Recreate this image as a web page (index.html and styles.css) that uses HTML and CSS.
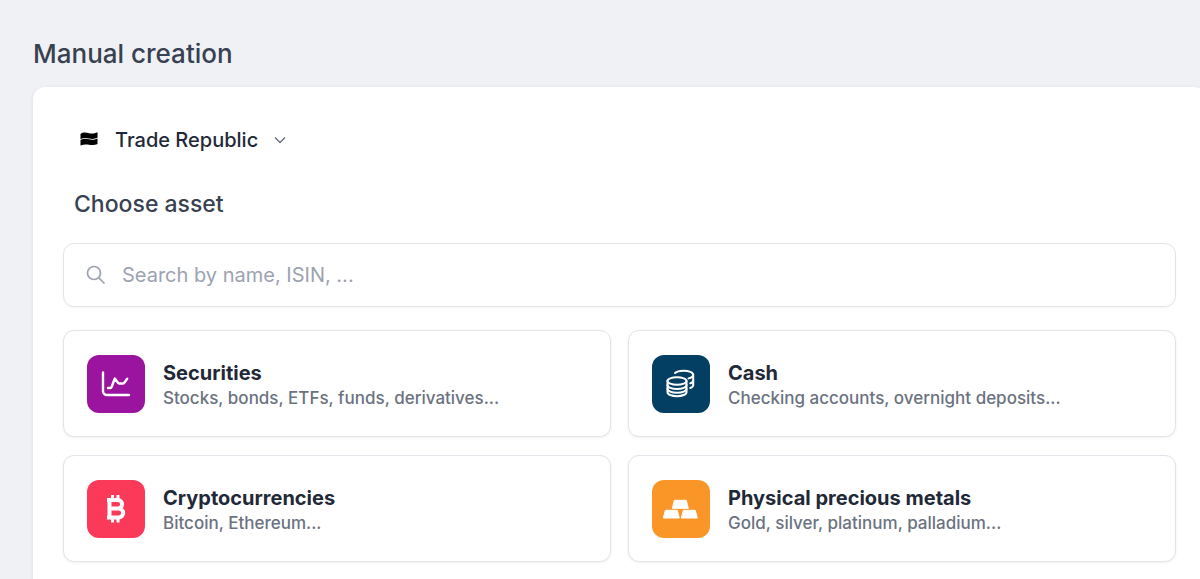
FILE: index.html
```html
<!DOCTYPE html>
<html lang="en">
<head>
    <meta charset="UTF-8">
    <meta name="viewport" content="width=device-width, initial-scale=1.0">
    <title>Manual creation</title>
    <link rel="stylesheet" href="styles.css">
</head>
<body>
    <h1>Manual creation</h1>
    <main class="panel">
        <!-- Account -->
        <div class="account">
            <svg class="account-logo" viewBox="0 0 18 14" aria-hidden="true">
                <path d="M.5 2C3 0 6 .6 9 1.200c3 .6 5.500.4 8.500-1v5.600c-3 1.400-5.500 1.300-8.500.7C6 5.900 3.500 5.400.5 7.200z"/>
                <path d="M.5 8C3.500 6.200 6 6.700 9 7.300c3 .6 5.500.5 8.500-.9v5.600c-3 1.300-5.500 1.300-8.500.8-3-.5-5.500-.5-8.500.7z"/>
            </svg>
            <div class="account-select">
                <select id="account" name="account" aria-label="Account">
                    <option>Trade Republic</option>
                </select>
                <svg class="chevron" viewBox="0 0 12 8" aria-hidden="true">
                    <path d="M1 1.500l5 5 5-5"/>
                </svg>
            </div>
        </div>

        <h2>Choose asset</h2>

        <!-- Search -->
        <label class="search">
            <svg viewBox="0 0 20 20" aria-hidden="true">
                <circle cx="8" cy="8" r="6.500"/>
                <path d="M12.800 12.800l5.700 5.700"/>
            </svg>
            <input type="text" name="search" placeholder="Search by name, ISIN, ..." aria-label="Search">
        </label>

        <!-- Asset types -->
        <div class="assets">
            <button type="button" class="asset">
                <span class="icon securities">
                    <svg viewBox="0 0 58 58" aria-hidden="true">
                        <path d="M16 17.500v18.500a4 4 0 0 0 4 4h22"/>
                        <path d="M21 33h2.200a1.500 1.500 0 0 0 1.400-1l3.200-8.500 3.400 4.500a1 1 0 0 0 .9.500h3.500a2 2 0 0 0 1.700-.8l2.900-4"/>
                    </svg>
                </span>
                <span class="text">
                    <strong>Securities</strong>
                    <small>Stocks, bonds, ETFs, funds, derivatives...</small>
                </span>
            </button>
            <button type="button" class="asset">
                <span class="icon cash">
                    <svg viewBox="0 0 58 58" aria-hidden="true">
                        <ellipse cx="25" cy="26" rx="9.500" ry="3.800"/>
                        <path d="M15.500 26v11.200c0 2.200 4.200 4 9.500 4s9.500-1.800 9.500-4V26"/>
                        <path d="M15.500 30c0 2.200 4.200 4 9.500 4s9.500-1.800 9.500-4M15.500 33.800c0 2.200 4.200 4 9.500 4s9.500-1.800 9.500-4"/>
                        <path d="M23 18c1.500-1.500 4.500-2.300 8.500-2.300 5.500 0 9.700 1.800 9.700 4v10.500c0 1.200-1 2-3 2.800"/>
                        <path d="M41.200 19.700c0 2-1.700 3-4.700 3.700M41.200 25.200c0 1.500-1 2.500-3 3.200"/>
                    </svg>
                </span>
                <span class="text">
                    <strong>Cash</strong>
                    <small>Checking accounts, overnight deposits...</small>
                </span>
            </button>
            <button type="button" class="asset">
                <span class="icon crypto">
                    <svg viewBox="0 0 58 58" aria-hidden="true">
                        <path d="M20 20h10.800a4.200 4.200 0 0 1 0 8.500H22.500M31 28.500h.7a4.500 4.500 0 0 1 0 9H20M22.500 20v17.500"/>
                        <path class="ticks" d="M25.500 15v4M31 15v4M25.500 38.500v4M31 38.500v4"/>
                    </svg>
                </span>
                <span class="text">
                    <strong>Cryptocurrencies</strong>
                    <small>Bitcoin, Ethereum...</small>
                </span>
            </button>
            <button type="button" class="asset">
                <span class="icon metals">
                    <svg viewBox="0 0 58 58" aria-hidden="true">
                        <path d="M22.700 20.300h11.600l2 8H20.700z"/>
                        <path d="M13.700 30.300h11.600l2 7.700H11.700z"/>
                        <path d="M31.700 30.300h11.600l2 7.700H29.700z"/>
                    </svg>
                </span>
                <span class="text">
                    <strong>Physical precious metals</strong>
                    <small>Gold, silver, platinum, palladium...</small>
                </span>
            </button>
        </div>
    </main>
</body>
</html>
```
FILE: styles.css
```css
* {
    box-sizing: border-box;
}
body {
    margin: 0;
    padding: 36px 0 0 33px;
    background: #f0f1f5;
    color: #374151;
    font-family: Inter, "Liberation Sans", sans-serif;
    overflow: hidden;
}
h1 {
    margin: 0 0 15px;
    font-size: 26px;
    line-height: 36px;
    font-weight: 500;
}
.panel {
    min-height: calc(100vh - 87px);
    margin-right: -6px;
    padding: 38px 30px 30px;
    background: #fff;
    border-radius: 12px;
    box-shadow: 0 1px 4px rgba(0, 0, 0, 0.08);
}
.account {
    display: flex;
    align-items: center;
    gap: 17px;
    height: 30px;
    padding-left: 17px;
}
.account-logo {
    width: 18px;
    height: 14px;
    margin-bottom: 2px;
    fill: #000;
}
.account-select {
    position: relative;
}
select {
    appearance: none;
    padding: 0 28px 0 0;
    border: 0;
    background: none;
    color: #1f2937;
    font: 500 20px/30px Inter, "Liberation Sans", sans-serif;
}
.chevron {
    position: absolute;
    right: 1px;
    top: 11px;
    width: 12px;
    height: 8px;
    fill: none;
    stroke: #6b7280;
    stroke-width: 1.500;
    pointer-events: none;
}
h2 {
    margin: 32px 0 22px 11px;
    font-size: 23px;
    line-height: 34px;
    font-weight: 500;
}
.search {
    display: flex;
    align-items: center;
    gap: 16px;
    height: 64px;
    margin-bottom: 23px;
    padding: 0 22px;
    border: 1px solid #e2e4ea;
    border-radius: 11px;
    box-shadow: 0 1px 2px rgba(0, 0, 0, 0.04);
}
.search svg {
    width: 20px;
    height: 20px;
    fill: none;
    stroke: #9ca3af;
    stroke-width: 1.700;
}
.search input {
    flex: 1;
    padding: 0;
    border: 0;
    outline: 0;
    background: none;
    color: #374151;
    font: 400 20px/30px Inter, "Liberation Sans", sans-serif;
}
.search input::placeholder {
    color: #9ca3af;
}
.assets {
    display: grid;
    grid-template-columns: 1fr 1fr;
    gap: 18px 17px;
}
.asset {
    display: flex;
    align-items: center;
    gap: 18px;
    padding: 24px 23px 23px;
    border: 1px solid #e2e4ea;
    border-radius: 11px;
    background: #fff;
    box-shadow: 0 1px 3px rgba(0, 0, 0, 0.06);
    font-family: inherit;
    text-align: left;
    cursor: pointer;
}
.icon {
    width: 58px;
    height: 58px;
    border-radius: 12px;
}
.icon svg {
    display: block;
    fill: none;
    stroke: #fff;
    stroke-width: 2.400;
    stroke-linecap: round;
    stroke-linejoin: round;
}
.securities {
    background: #9a14a0;
}
.cash {
    background: #033f63;
}
.cash svg {
    stroke-width: 2;
}
.crypto {
    background: #fb3a5a;
}
.crypto svg {
    stroke-width: 4;
    stroke-linecap: butt;
}
.crypto .ticks {
    stroke-width: 3;
}
.metals {
    background: #f99627;
}
.metals svg {
    fill: #fff;
    stroke-width: 1;
}
.text {
    padding-top: 2px;
}
.text strong,
.text small {
    display: block;
}
.text strong {
    color: #1f2937;
    font-size: 20px;
    line-height: 26px;
    font-weight: 700;
}
.text small {
    color: #6b7280;
    font-size: 17px;
    line-height: 24px;
    font-weight: 500;
}
```
